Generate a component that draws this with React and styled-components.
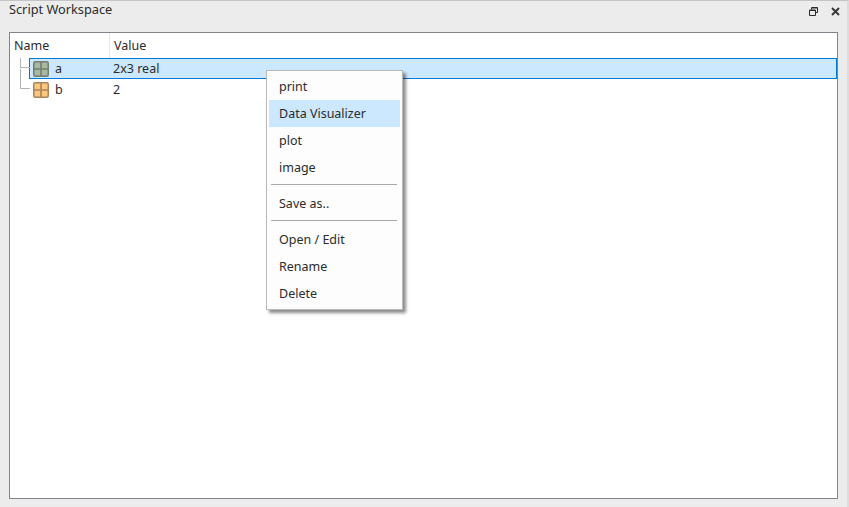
import styled, { createGlobalStyle } from "styled-components";

const GlobalStyle = createGlobalStyle`
  html, body {
    margin: 0;
    padding: 0;
    background: #ececec;
  }
  body {
    font-family: "Noto Sans", "Open Sans", "Liberation Sans", sans-serif;
    font-size: 12.5px;
    color: #2b2b2b;
  }
`;

const Window = styled.div`
  width: 849px;
  height: 507px;
  box-sizing: border-box;
  display: flex;
  flex-direction: column;
  background: #ececec;
  border-top: 1px solid #c4c4c4;
  border-right: 2px solid #dcdcdc;
  padding: 0 9px 8px 9px;
`;

const TitleBar = styled.div`
  height: 31px;
  flex-shrink: 0;
  display: flex;
  justify-content: space-between;
  box-sizing: border-box;
`;

const Title = styled.span`
  font-size: 12.75px;
  line-height: 17px;
`;

const TitleButtons = styled.div`
  display: flex;
  gap: 13px;
  padding-top: 6px;
  height: 10px;
  margin-right: -2px;
`;

const Panel = styled.div`
  flex: 1;
  position: relative;
  background: #fff;
  border: 1px solid #83838b;
`;

const HeaderRow = styled.div`
  display: flex;
  height: 25px;
  align-items: center;
`;

const HeaderCell = styled.div`
  width: ${(p) => p.$width || "auto"};
  height: 100%;
  box-sizing: border-box;
  padding-left: 4px;
  line-height: 26px;
  border-right: ${(p) => (p.$divider ? "1px solid #e6e6e6" : "none")};
`;

const TreeRow = styled.div`
  position: relative;
  display: flex;
  align-items: center;
  height: 21px;
  box-sizing: border-box;
  margin-left: 19px;
  padding-left: 3px;
  border: 1px solid ${(p) => (p.$selected ? "#0078d7" : "transparent")};
  background: ${(p) => (p.$selected ? "#cce8ff" : "transparent")};
`;

const Branch = styled.span`
  position: absolute;
  left: -10px;
  top: ${(p) => (p.$last ? "-11px" : "-1px")};
  width: 10px;
  height: ${(p) => (p.$last ? "20px" : "10px")};
  border-left: 1px solid #b4b4b4;
  border-bottom: 1px solid #b4b4b4;
  box-sizing: border-box;
`;

const NameCell = styled.span`
  width: 58px;
  margin-left: 6px;
`;

const Menu = styled.div`
  position: absolute;
  left: 256px;
  top: 37px;
  width: 137px;
  box-sizing: border-box;
  background: #fdfdfd;
  border: 1px solid #b9b9b9;
  padding: 2px;
  box-shadow: 3px 3px 3px rgba(0, 0, 0, 0.45);
`;

const MenuItem = styled.div`
  height: 27px;
  line-height: 27px;
  padding-left: 10px;
  background: ${(p) => (p.$active ? "#cce8ff" : "transparent")};
`;

const MenuSeparator = styled.div`
  height: 1px;
  background: #a8a8a8;
  margin: 3px 3px 5px 2px;
`;

const VarIcon = ({ tone }) => {
  const fill = tone === "green" ? "#a9b8a1" : "#fbc77f";
  const edge = tone === "green" ? "#737d70" : "#a9845a";
  return (
    <svg width="16" height="16" viewBox="0 0 16 16">
      <rect x="0.75" y="0.75" width="14.5" height="14.5" rx="1.5" fill={fill} stroke={edge} strokeWidth="1.5" />
      <path d="M8 1v14M1 8h14" stroke={edge} strokeWidth="1.6" />
    </svg>
  );
};

const RestoreIcon = () => (
  <svg width="9" height="9" viewBox="0 0 9 9">
    <path d="M2.5 2.5V.5h6v5h-2M.5 3h6v5.5h-6z" fill="none" stroke="#2a2a2a" strokeWidth="1" />
    <path d="M3 1h5.5M1 3.5h5.5" stroke="#2a2a2a" strokeWidth="1.2" />
  </svg>
);

const CloseIcon = () => (
  <svg width="9" height="9" viewBox="0 0 9 9">
    <path d="M1 1l7 7M8 1l-7 7" stroke="#3a3a3a" strokeWidth="2" />
  </svg>
);

const App = () => (
  <>
    <GlobalStyle />
    <Window>
      <TitleBar>
        <Title>Script Workspace</Title>
        <TitleButtons>
          <RestoreIcon />
          <CloseIcon />
        </TitleButtons>
      </TitleBar>
      <Panel>
        <HeaderRow>
          <HeaderCell $width="100px" $divider>Name</HeaderCell>
          <HeaderCell>Value</HeaderCell>
        </HeaderRow>
        <TreeRow $selected>
          <Branch />
          <VarIcon tone="green" />
          <NameCell>a</NameCell>
          <span>2x3 real</span>
        </TreeRow>
        <TreeRow>
          <Branch $last />
          <VarIcon tone="orange" />
          <NameCell>b</NameCell>
          <span>2</span>
        </TreeRow>
        <Menu>
          <MenuItem>print</MenuItem>
          <MenuItem $active>Data Visualizer</MenuItem>
          <MenuItem>plot</MenuItem>
          <MenuItem>image</MenuItem>
          <MenuSeparator />
          <MenuItem>Save as..</MenuItem>
          <MenuSeparator />
          <MenuItem>Open / Edit</MenuItem>
          <MenuItem>Rename</MenuItem>
          <MenuItem>Delete</MenuItem>
        </Menu>
      </Panel>
    </Window>
  </>
);

export default App;
